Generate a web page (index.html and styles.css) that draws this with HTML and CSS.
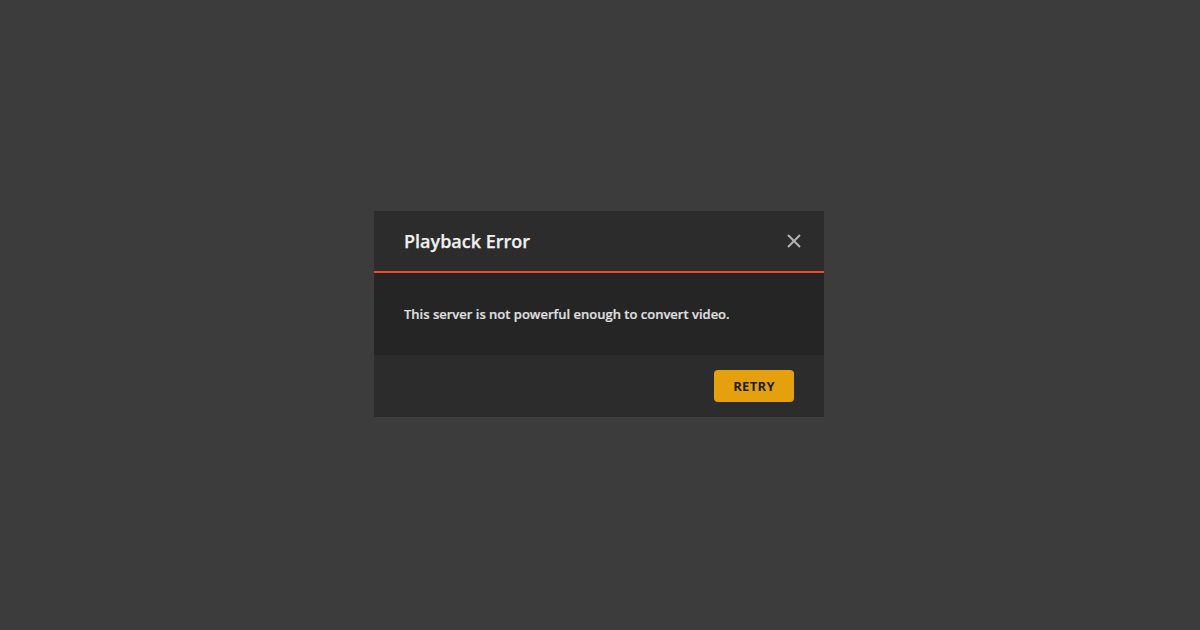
FILE: index.html
```html
<!DOCTYPE html>
<html>
<head>
<meta charset="utf-8">
<link rel="stylesheet" href="styles.css">
</head>
<body>
<div class="page">
  <div class="modal">
    <div class="modal-header">
      <h2 class="modal-title">Playback Error</h2>
      <button class="close-btn" aria-label="Close">
        <svg width="14" height="14" viewBox="0 0 14 14"><path d="M1 1L13 13M13 1L1 13" stroke="#b3b3b3" stroke-width="2" fill="none"/></svg>
      </button>
    </div>
    <div class="modal-body">
      <p class="message">This server is not powerful enough to convert video.</p>
    </div>
    <div class="modal-footer">
      <button class="retry-btn">RETRY</button>
    </div>
  </div>
</div>
</body>
</html>
```
FILE: styles.css
```css
html, body {
  margin: 0;
  padding: 0;
  height: 100%;
  background: #3c3c3c;
  font-family: "Open Sans", "Noto Sans", sans-serif;
}
.page {
  height: 630px;
  display: flex;
  justify-content: center;
  align-items: flex-start;
  padding-top: 211px;
  padding-right: 2px;
  box-sizing: border-box;
}
.modal {
  width: 450px;
  background: #2c2c2c;
}
.modal-header {
  height: 60px;
  display: flex;
  align-items: center;
  justify-content: space-between;
  padding: 0 22px 0 30px;
  border-bottom: 2px solid #ec4a2b;
}
.modal-title {
  margin: 0;
  font-size: 18px;
  font-weight: 600;
  color: #f0f0f0;
  line-height: 24px;
  padding-bottom: 1px;
  -webkit-text-stroke: 0.25px #f0f0f0;
}
.close-btn {
  background: none;
  border: none;
  padding: 0;
  width: 16px;
  height: 16px;
  display: flex;
  align-items: center;
  justify-content: center;
  cursor: pointer;
  margin-bottom: 1px;
}
.modal-body {
  background: #252525;
  height: 82px;
  display: flex;
  align-items: center;
  padding: 0 30px;
}
.message {
  margin: 0;
  font-size: 13px;
  font-weight: 600;
  color: #e0e0e0;
  padding-bottom: 1px;
  -webkit-text-stroke: 0.2px #e0e0e0;
}
.modal-footer {
  height: 62px;
  display: flex;
  align-items: center;
  justify-content: flex-end;
  padding: 0 30px;
}
.retry-btn {
  width: 80px;
  height: 32px;
  border: none;
  border-radius: 4px;
  background: #e5a00d;
  color: #1f1f1f;
  font-family: "Open Sans", "Noto Sans", sans-serif;
  font-size: 13px;
  font-weight: 700;
  letter-spacing: 0.3px;
  cursor: pointer;
}
```
